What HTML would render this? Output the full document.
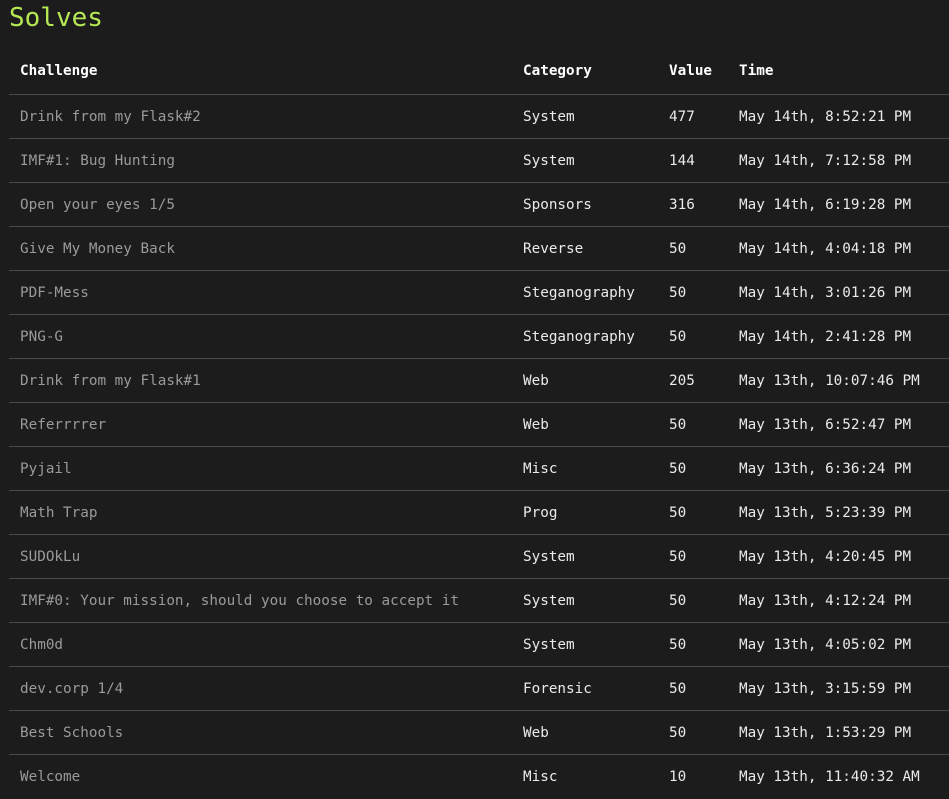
<!DOCTYPE html>
<html><head><meta charset="utf-8"><style>
html,body{margin:0;background:#1c1c1c;width:949px;height:799px;overflow:hidden;font-family:"DejaVu Sans Mono","Liberation Mono",monospace;}
h1{position:absolute;left:9px;top:1px;margin:0;font-size:26px;font-weight:normal;color:#b5e853;line-height:34px;}
table{position:absolute;left:9px;top:50px;width:940px;border-collapse:collapse;font-size:14.3px;}
td,th{padding:0 0 0 11px;text-align:left;border-bottom:1px solid #4a4a4a;color:#eaeaea;white-space:nowrap}
th{height:44px;font-weight:bold;color:#fff;padding-bottom:2px;box-sizing:border-box}
td{height:44px;padding-top:2px;box-sizing:border-box}
td:first-child{color:#9a9a9a}
tr:last-child td{border-bottom:none}
</style></head><body>
<h1>Solves</h1>
<table>
<tr><th style="width:503px">Challenge</th><th style="width:146px">Category</th><th style="width:70px">Value</th><th>Time</th></tr>
<tr><td>Drink from my Flask#2</td><td>System</td><td>477</td><td>May 14th, 8:52:21 PM</td></tr>
<tr><td>IMF#1: Bug Hunting</td><td>System</td><td>144</td><td>May 14th, 7:12:58 PM</td></tr>
<tr><td>Open your eyes 1/5</td><td>Sponsors</td><td>316</td><td>May 14th, 6:19:28 PM</td></tr>
<tr><td>Give My Money Back</td><td>Reverse</td><td>50</td><td>May 14th, 4:04:18 PM</td></tr>
<tr><td>PDF-Mess</td><td>Steganography</td><td>50</td><td>May 14th, 3:01:26 PM</td></tr>
<tr><td>PNG-G</td><td>Steganography</td><td>50</td><td>May 14th, 2:41:28 PM</td></tr>
<tr><td>Drink from my Flask#1</td><td>Web</td><td>205</td><td>May 13th, 10:07:46 PM</td></tr>
<tr><td>Referrrrer</td><td>Web</td><td>50</td><td>May 13th, 6:52:47 PM</td></tr>
<tr><td>Pyjail</td><td>Misc</td><td>50</td><td>May 13th, 6:36:24 PM</td></tr>
<tr><td>Math Trap</td><td>Prog</td><td>50</td><td>May 13th, 5:23:39 PM</td></tr>
<tr><td>SUDOkLu</td><td>System</td><td>50</td><td>May 13th, 4:20:45 PM</td></tr>
<tr><td>IMF#0: Your mission, should you choose to accept it</td><td>System</td><td>50</td><td>May 13th, 4:12:24 PM</td></tr>
<tr><td>Chm0d</td><td>System</td><td>50</td><td>May 13th, 4:05:02 PM</td></tr>
<tr><td>dev.corp 1/4</td><td>Forensic</td><td>50</td><td>May 13th, 3:15:59 PM</td></tr>
<tr><td>Best Schools</td><td>Web</td><td>50</td><td>May 13th, 1:53:29 PM</td></tr>
<tr><td>Welcome</td><td>Misc</td><td>10</td><td>May 13th, 11:40:32 AM</td></tr>
</table>
</body></html>
